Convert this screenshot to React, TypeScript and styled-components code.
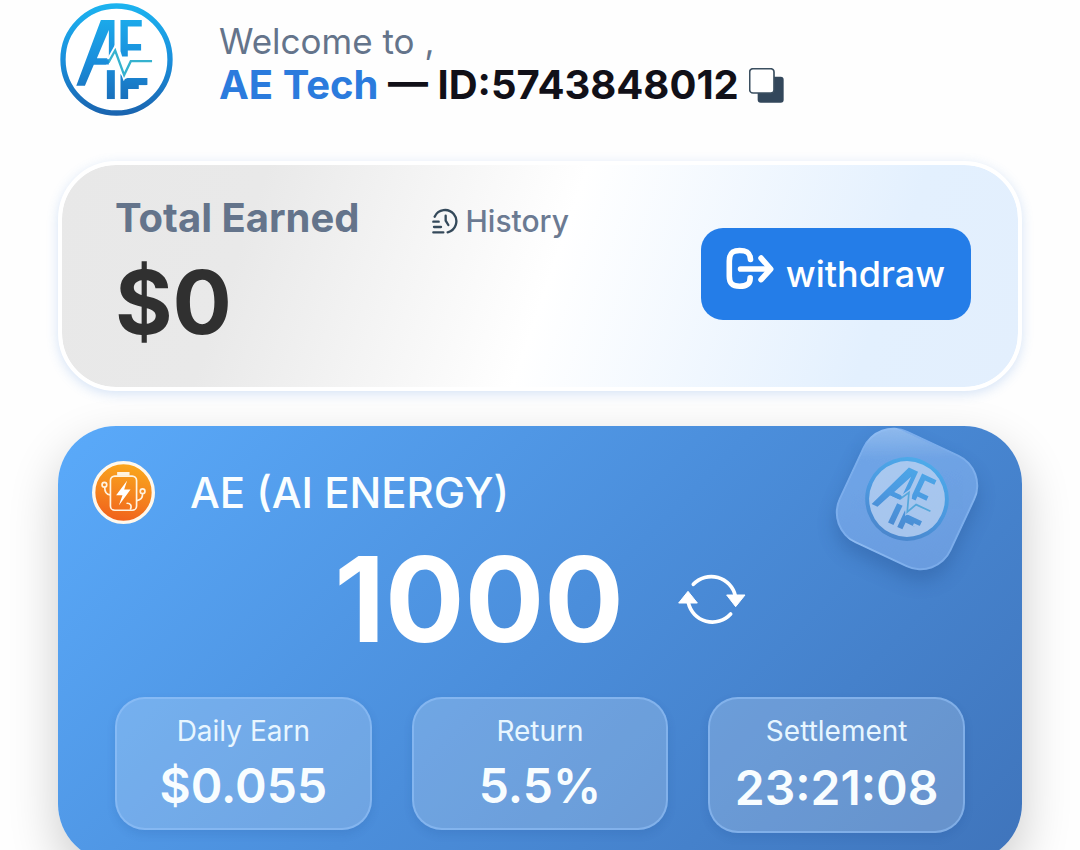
import React from "react";
import styled, { createGlobalStyle } from "styled-components";

const GlobalStyle = createGlobalStyle`
  *, *::before, *::after { box-sizing: border-box; }
  html { scrollbar-width: none; }
  body {
    margin: 0;
    background: #fefefe;
    font-family: Inter, "Liberation Sans", sans-serif;
    overflow-x: hidden;
  }
  h1, h2, p, dl, dt, dd { margin: 0; }
  button { font-family: inherit; border: 0; padding: 0; background: none; cursor: pointer; }
`;

const Page = styled.main`
  display: flex;
  flex-direction: column;
  padding: 3px 58px 0;
`;

const Header = styled.header`
  display: flex;
  align-items: flex-start;
  gap: 46px;
  padding-left: 2px;
  margin-bottom: 45px;
`;

const Greeting = styled.div`
  padding-top: 16px;
`;

const Welcome = styled.p`
  font-size: 35px;
  line-height: 44px;
  color: #64748b;
`;

const Identity = styled.h1`
  display: flex;
  align-items: center;
  gap: 10px;
  font-size: 40px;
  line-height: 44px;
  font-weight: 700;
  color: #111018;
  white-space: nowrap;
`;

const Brand = styled.span`
  color: #2b7bdd;
`;

const IconButton = styled.button`
  display: flex;
`;

const EarnedCard = styled.section`
  display: flex;
  justify-content: space-between;
  align-items: center;
  padding: 31px 47px 35px 53px;
  border: 4px solid #fff;
  border-radius: 58px;
  background: linear-gradient(109deg, #e8e8e8 0%, #e9e9e9 20%, #fff 51%, #e3f0fe 84%, #e3effd 100%) padding-box, #fff;
  box-shadow: 0 3px 12px rgba(70, 130, 220, 0.22);
  margin-bottom: 35px;
`;

const EarnedTop = styled.div`
  display: flex;
  align-items: center;
  gap: 72px;
`;

const EarnedTitle = styled.h2`
  font-size: 40px;
  line-height: 44px;
  font-weight: 700;
  color: #64748b;
`;

const HistoryButton = styled.button`
  display: flex;
  align-items: center;
  gap: 8px;
  padding-top: 6px;
  font-size: 30px;
  line-height: 36px;
  font-weight: 500;
  color: #6b7a92;
`;

const EarnedValue = styled.p`
  padding-top: 12px;
  font-size: 88px;
  line-height: 100px;
  font-weight: 700;
  color: #303030;
`;

const WithdrawButton = styled.button`
  display: flex;
  align-items: center;
  gap: 12px;
  height: 92px;
  padding: 0 26px 0 25px;
  border-radius: 22px;
  background: #247de8;
  color: #fff;
  font-size: 36px;
  line-height: 44px;
  font-weight: 500;

  svg {
    margin-bottom: 12px;
  }
`;

const EnergyCard = styled.section`
  position: relative;
  overflow: hidden;
  padding: 35px 57px 29px;
  border-radius: 58px;
  background: linear-gradient(135deg, #5aaafa 0%, #4b8edb 50%, #3f74bb 100%);
`;

const EnergyShadow = styled.div`
  border-radius: 58px;
  box-shadow: 0 20px 50px rgba(0, 0, 0, 0.2);
`;

const EnergyHeader = styled.div`
  display: flex;
  align-items: center;
  gap: 35px;
  margin-left: -23px;
`;

const EnergyTitle = styled.h2`
  font-size: 42px;
  line-height: 52px;
  font-weight: 500;
  color: #fafeff;
`;

const Amount = styled.div`
  display: flex;
  justify-content: center;
  align-items: center;
  gap: 54px;
  padding: 17px 0 40px;
  font-size: 118px;
  line-height: 116px;
  font-weight: 700;
  color: #fff;
`;

const Stats = styled.dl`
  display: grid;
  grid-template-columns: repeat(3, 1fr);
  align-items: start;
  gap: 40px;
`;

const Stat = styled.div`
  padding: 15px 0 12px;
  border: 2px solid rgba(150, 195, 250, 0.55);
  border-radius: 30px;
  background: rgba(255, 255, 255, 0.2);
  box-shadow: 0 4px 10px rgba(20, 60, 120, 0.12);
  text-align: center;
`;

const StatLabel = styled.dt`
  font-size: 28px;
  line-height: 34px;
  color: #e8f6ff;
`;

const StatValue = styled.dd<{ $tall?: boolean }>`
  margin-top: 8px;
  font-size: 48px;
  line-height: ${({ $tall }) => ($tall ? 63 : 60)}px;
  font-weight: 600;
  color: #f8fdff;
`;

const Badge = styled.div`
  position: absolute;
  top: 11px;
  right: 53px;
  display: grid;
  place-items: center;
  width: 124px;
  height: 124px;
  border: 2px solid rgba(150, 195, 250, 0.4);
  border-radius: 34px;
  background: linear-gradient(155deg, rgba(205, 228, 255, 0.6), rgba(150, 192, 248, 0.5) 25%, rgba(140, 180, 240, 0.5));
  box-shadow: 4px 10px 18px rgba(30, 70, 130, 0.3);
  transform: rotate(25deg);

  svg {
    opacity: 0.4;
  }
`;

function Logo({ size, id }: { size: number; id: string }) {
  return (
    <svg width={size} height={size} viewBox="60 11 338 340" role="img" aria-label="AE logo">
      <defs>
        <linearGradient id={id} gradientUnits="userSpaceOnUse" x1="229" y1="11" x2="229" y2="351">
          <stop offset="0" stopColor="#1cb4f0" />
          <stop offset="0.5" stopColor="#1a8fdc" />
          <stop offset="1" stopColor="#1a63ae" />
        </linearGradient>
      </defs>
      <circle cx="229" cy="181" r="161" fill="#fff" stroke={`url(#${id})`} strokeWidth="16" />
      <g fill={`url(#${id})`}>
        <path d="M182 62H223V148L206 176V92L170 177H206L198 196H161L134 260H108Z" />
        <path d="M241 62H305V82H263V134H303V154H263V172H246L241 156Z" />
        <path d="M200 213H224V300H200Z" />
        <path d="M241 225L254 240L262 237H322V257L304 270H264V300H241Z" />
      </g>
      <path d="M296 264H322" stroke="#fff" strokeWidth="12" />
      <path d="M200 196L225 152L252 226L272 186H336" fill="none" stroke="#fff" strokeWidth="16" />
      <path d="M160 188H206L225 154L252 228L272 186H336" fill="none" stroke="#35b2cf" strokeWidth="7" />
      <path d="M158 188H206" stroke={`url(#${id})`} strokeWidth="16" />
    </svg>
  );
}

function CopyIcon() {
  return (
    <svg width="35" height="35" viewBox="762 74 105 105" aria-hidden="true">
      <rect x="788" y="100" width="78" height="78" rx="9" fill="#33475b" />
      <rect x="764" y="76" width="73" height="73" rx="10" fill="#fff" stroke="#3b4f60" strokeWidth="5" />
    </svg>
  );
}

function HistoryIcon() {
  return (
    <svg width="26" height="26" viewBox="97 78 78 78" fill="none" stroke="#34495a" strokeWidth="7" strokeLinecap="round" aria-hidden="true">
      <path d="M105 104A34 34 0 1 1 144 151" />
      <path d="M138 101V116L146 129" />
      <path d="M101 119H117M103 135H124M101 151H131" />
    </svg>
  );
}

function WithdrawIcon() {
  return (
    <svg width="48" height="43" viewBox="127 118 145 129" fill="none" stroke="#fff" strokeWidth="17" strokeLinecap="round" strokeLinejoin="round" aria-hidden="true">
      <path d="M201 155C200 133 189 128 168 128C143 128 137 139 137 160V206C137 229 146 236 168 236C190 236 200 229 200 211" />
      <path d="M171 184H258" />
      <path d="M233 151L262 184L233 216" />
    </svg>
  );
}

function RefreshIcon() {
  return (
    <svg width="68" height="54" viewBox="1076 100 204 162" aria-hidden="true">
      <g fill="none" stroke="#fff" strokeWidth="11" strokeLinecap="round">
        <path d="M1122 137A74 74 0 0 1 1248 172" />
        <path d="M1107 192A74 74 0 0 0 1234 226" />
      </g>
      <g fill="#fff" stroke="#fff" strokeWidth="3" strokeLinejoin="round">
        <path d="M1222 169H1277L1249 204Z" />
        <path d="M1078 193H1134L1106 158Z" />
      </g>
    </svg>
  );
}

function EnergyIcon() {
  return (
    <svg width="63" height="63" viewBox="127 126 188 188" aria-hidden="true">
      <defs>
        <linearGradient id="energy" x1="0.6" y1="0" x2="0.4" y2="1">
          <stop offset="0" stopColor="#f9a81c" />
          <stop offset="0.5" stopColor="#f5861e" />
          <stop offset="1" stopColor="#f0601c" />
        </linearGradient>
      </defs>
      <circle cx="221" cy="220" r="89" fill="url(#energy)" stroke="#fff8ec" strokeWidth="10" />
      <g fill="none" stroke="#fff3e0" strokeWidth="5" strokeLinecap="round">
        <rect x="182" y="171" width="78" height="102" rx="13" />
        <circle cx="164" cy="197" r="7" />
        <path d="M165 205C165 218 170 226 181 227" />
        <circle cx="278" cy="216" r="7" />
        <path d="M278 224C278 236 273 243 261 244" />
        <path d="M232 252C242 252 246 260 242 269" />
      </g>
      <path d="M202 159H239V170H202Z" fill="#fff3e0" />
      <path d="M232 184L199 228H218L207 259L242 211H223Z" fill="#fff" />
    </svg>
  );
}

const stats = [
  { label: "Daily Earn", value: "$0.055" },
  { label: "Return", value: "5.5%" },
  { label: "Settlement", value: "23:21:08", tall: true },
];

export default function App() {
  return (
    <>
      <GlobalStyle />
      <Page>
        <Header>
          <Logo size={113} id="logo-header" />
          <Greeting>
            <Welcome>Welcome to ,</Welcome>
            <Identity>
              <span>
                <Brand>AE Tech</Brand> — ID:5743848012
              </span>
              <IconButton type="button" aria-label="Copy ID">
                <CopyIcon />
              </IconButton>
            </Identity>
          </Greeting>
        </Header>

        <EarnedCard>
          <div>
            <EarnedTop>
              <EarnedTitle>Total Earned</EarnedTitle>
              <HistoryButton type="button">
                <HistoryIcon />
                History
              </HistoryButton>
            </EarnedTop>
            <EarnedValue>$0</EarnedValue>
          </div>
          <WithdrawButton type="button">
            <WithdrawIcon />
            withdraw
          </WithdrawButton>
        </EarnedCard>

        <EnergyShadow>
          <EnergyCard>
            <Badge>
              <Logo size={84} id="logo-badge" />
            </Badge>
            <EnergyHeader>
              <EnergyIcon />
              <EnergyTitle>AE (AI ENERGY)</EnergyTitle>
            </EnergyHeader>
            <Amount>
              <span>1000</span>
              <IconButton type="button" aria-label="Refresh">
                <RefreshIcon />
              </IconButton>
            </Amount>
            <Stats>
              {stats.map((stat) => (
                <Stat key={stat.label}>
                  <StatLabel>{stat.label}</StatLabel>
                  <StatValue $tall={stat.tall}>{stat.value}</StatValue>
                </Stat>
              ))}
            </Stats>
          </EnergyCard>
        </EnergyShadow>
      </Page>
    </>
  );
}
